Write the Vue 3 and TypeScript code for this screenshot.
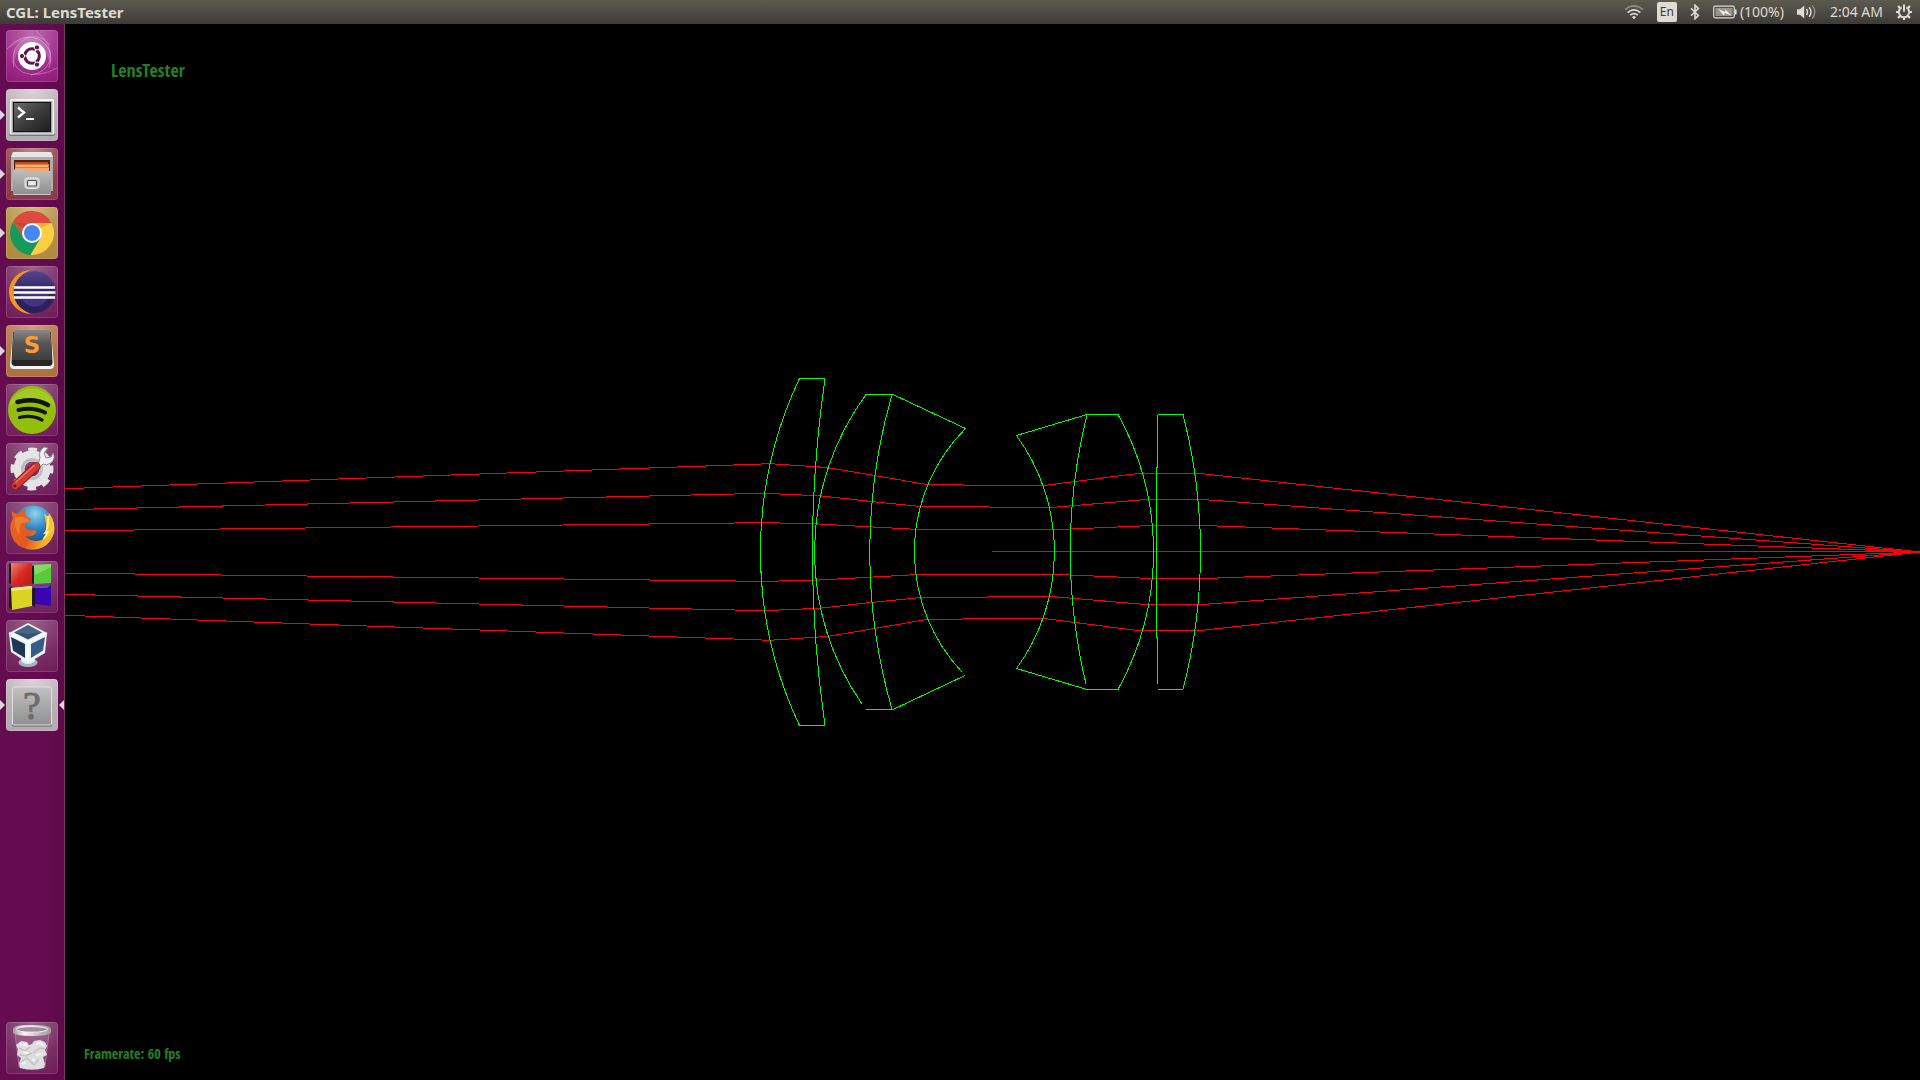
<script setup lang="ts">
interface LauncherItem {
  id: string
  label: string
  tint: string
  running?: boolean
  focused?: boolean
}

type Point = [number, number]

const launcher: LauncherItem[] = [
  { id: 'dash', label: 'Search your computer', tint: 'dash' },
  { id: 'terminal', label: 'Terminal', tint: 'silver', running: true },
  { id: 'files', label: 'Files', tint: 'rust', running: true },
  { id: 'chrome', label: 'Google Chrome', tint: 'gold', running: true },
  { id: 'eclipse', label: 'Eclipse', tint: 'plain' },
  { id: 'sublime', label: 'Sublime Text', tint: 'copper', running: true },
  { id: 'spotify', label: 'Spotify', tint: 'plain' },
  { id: 'settings', label: 'System Settings', tint: 'plain' },
  { id: 'firefox', label: 'Firefox', tint: 'plain' },
  { id: 'blocks', label: 'Code::Blocks', tint: 'plain' },
  { id: 'vbox', label: 'VirtualBox', tint: 'plain' },
  { id: 'unknown', label: 'CGL: LensTester', tint: 'silver', running: true, focused: true },
  { id: 'trash', label: 'Trash', tint: 'plain' },
]

// Optical axis of the bench; the lower half of the ray fan mirrors the upper one.
const axis = 552
const focus: Point = [1920, 552]

const upperRays: Point[][] = [
  [[65, 488.7], [770, 463.7], [815, 466.7], [828, 467.6], [875, 475.6], [925, 484.2], [990, 485.6], [1043, 485.6], [1137, 473.6], [1201, 473.6], focus],
  [[65, 509.7], [764, 493.3], [813, 495.5], [820, 495.8], [870, 501.4], [919, 506.3], [1050, 507.6], [1147, 499.4], [1201, 499.4], focus],
  [[65, 530.8], [762, 522.7], [813, 523.6], [819, 524], [915, 529.3], [1053, 529.4], [1071, 529], [1154, 525.4], [1201, 525.4], focus],
]

const toPoints = (ray: Point[]): string => ray.map(([x, y]) => `${x},${y}`).join(' ')
const mirror = (ray: Point[]): Point[] => ray.map(([x, y]) => [x, 2 * axis - y])

const rays: string[] = [...upperRays, ...upperRays.map(mirror)].map(toPoints)

const lensPaths: string[] = [
  'M825 378.5H799.5A405 405 0 0 0 799.5 725.5H825',
  'M825 378.5A1210 1210 0 0 0 825 725.5',
  'M862 704A267 267 0 0 1 866 394.5H893L965.5 428.5A175 175 0 0 0 962 672',
  'M892 394.5A569 569 0 0 0 892 709.5',
  'M866 709.5H893L965 675.5',
  'M1118 414.5H1087L1016.5 435.5A198 198 0 0 1 1016.5 668.5L1087 689.5H1118',
  'M1087 414.5A574 574 0 0 0 1086 684',
  'M1118 414.5A284 284 0 0 1 1118 689.5',
  'M1157.5 415V467H1156.5V637H1157.5V684',
  'M1158 414.5H1183A549 549 0 0 1 1183 689.5H1158',
]
</script>

<template>
  <div class="desktop">
    <header class="panel">
      <h1 class="title">CGL: LensTester</h1>
      <div class="indicators">
        <button class="indicator" aria-label="Network">
          <svg width="20" height="16" viewBox="0 0 20 16" fill="none" stroke="#dfdbd2" stroke-width="1.6">
            <path d="M1 5.6Q10-1.8 19 5.6" stroke="#8f8c84" />
            <path d="M3.6 8.6Q10 3.2 16.4 8.6" />
            <path d="M6.2 11.2Q10 8 13.8 11.2" />
            <path d="M8 13.2Q10 11 12 13.2L10 15.2Z" fill="#dfdbd2" stroke="none" />
          </svg>
        </button>
        <button class="indicator keyboard" aria-label="Keyboard layout">En</button>
        <button class="indicator" aria-label="Bluetooth">
          <svg width="10" height="16" viewBox="0 0 10 16" fill="none" stroke="#dfdbd2" stroke-width="1.6">
            <path d="M1 4.2L8.4 11.4L5 14.8V1.2L8.4 4.6L1 11.8" />
          </svg>
        </button>
        <button class="indicator battery" aria-label="Battery">
          <svg width="24" height="14" viewBox="0 0 24 14">
            <rect x="0.7" y="1.2" width="20.6" height="11.6" rx="1.5" fill="none" stroke="#dfdbd2" stroke-width="1.2" />
            <rect x="2.5" y="3" width="17" height="8" fill="#97948b" />
            <path d="M22 4.5h1.6v5H22z" fill="#dfdbd2" />
            <path d="M5 4L12 7L12.4 4.6L18.4 10.6L11.6 8L11 10.4Z" fill="#f2efe8" />
          </svg>
          <span>(100%)</span>
        </button>
        <button class="indicator" aria-label="Sound">
          <svg width="20" height="16" viewBox="0 0 20 16" fill="none" stroke="#dfdbd2" stroke-width="1.5">
            <path d="M0 5.2H3L7.2 1.4V14.6L3 10.8H0Z" fill="#dfdbd2" stroke="none" />
            <path d="M9.4 5Q11.6 8 9.4 11" />
            <path d="M12.2 3.2Q15.8 8 12.2 12.8" />
            <path d="M15.2 1.4Q20.4 8 15.2 14.6" stroke="#8f8c84" />
          </svg>
        </button>
        <button class="indicator clock">2:04 AM</button>
        <button class="indicator" aria-label="Session">
          <svg width="16" height="16" viewBox="0 0 16 16" fill="none" stroke="#dfdbd2">
            <path d="M5.6 3.4A5.2 5.2 0 1 0 10.4 3.4" stroke-width="2" />
            <path d="M8 0.6V7.6" stroke-width="2" />
            <path d="M0 8H3M13 8H16M8 13V16M2 2L4.4 4.4M14 2L11.6 4.4M2 14L4.4 11.6M14 14L11.6 11.6" stroke-width="2.2" />
          </svg>
        </button>
      </div>
    </header>

    <div class="workspace">
      <nav class="launcher" aria-label="Launcher">
        <div v-for="item in launcher" :key="item.id" class="slot" :class="[item.id, { running: item.running, focused: item.focused }]">
          <button class="tile" :class="item.tint" :aria-label="item.label">
            <svg v-if="item.id === 'dash'" viewBox="0 0 52 52">
              <g fill="none" stroke="#e9b9df" stroke-opacity="0.45" stroke-width="1">
                <path d="M1 19Q16 2 33 9Q50 20 43 38" />
                <path d="M8 37Q3 14 24 7Q36 5 44 15" />
                <path d="M30 1Q47 14 44 31Q39 43 25 45" />
                <path d="M7 31Q13 47 34 44Q45 42 51 38" />
              </g>
              <path d="M2 18Q18 1 34 9Q48 18 44 34Q40 18 26 13Q12 12 8 34Q4 18 20 8Z" fill="#fff" opacity="0.16" />
              <circle cx="26" cy="26" r="14" fill="#fff" />
              <circle cx="26" cy="26" r="7.3" fill="none" stroke="#65104d" stroke-width="3" stroke-dasharray="14 1.3" stroke-dashoffset="7" />
              <g fill="#65104d" stroke="#fff" stroke-width="1">
                <circle cx="16" cy="26" r="2.6" /><circle cx="31" cy="17.4" r="2.6" /><circle cx="31" cy="34.6" r="2.6" />
              </g>
            </svg>

            <svg v-else-if="item.id === 'terminal'" viewBox="0 0 52 52">
              <defs>
                <linearGradient id="term-screen" x1="0" y1="0" x2="1" y2="1">
                  <stop offset="0" stop-color="#6d6d6d" /><stop offset="0.5" stop-color="#3c3c3c" /><stop offset="1" stop-color="#1f1f1f" />
                </linearGradient>
              </defs>
              <rect x="3" y="10" width="46" height="37" rx="2" fill="#777" />
              <rect x="3.5" y="10" width="45" height="35.5" rx="1.5" fill="#f5f5f5" />
              <rect x="5.5" y="12" width="41" height="32.5" fill="#a9a9a9" />
              <rect x="7" y="13" width="38" height="30" fill="#111" />
              <rect x="8" y="14" width="36" height="28" fill="url(#term-screen)" />
              <path d="M12 18.5L18 23.5L12 28.5" fill="none" stroke="#fff" stroke-width="2.4" />
              <path d="M20 30H28" stroke="#fff" stroke-width="2.2" />
            </svg>

            <svg v-else-if="item.id === 'files'" viewBox="0 0 52 52">
              <defs>
                <linearGradient id="drawer" x1="0" y1="0" x2="0" y2="1">
                  <stop offset="0" stop-color="#bfbfbf" /><stop offset="1" stop-color="#8e8e8e" />
                </linearGradient>
              </defs>
              <path d="M7 4H45L47 8V43H5V8Z" fill="#aeaeae" />
              <path d="M7 4H45L47 9H5Z" fill="#e6e6e6" />
              <rect x="8" y="12" width="36" height="11" fill="#4f2012" />
              <path d="M9 14H42V17H9Z" fill="#bb4e25" /><path d="M9 16H43V21H9Z" fill="#e97735" /><path d="M10 18H42" stroke="#fff0cf" stroke-width="1" /><path d="M9 20H43V23H9Z" fill="#f6a766" />
              <path d="M7 21.5H18L20 23H45V46H7Z" fill="url(#drawer)" />
              <path d="M7.5 46.5H44.5" stroke="#c9c9c9" />
              <rect x="19" y="30" width="14" height="10.5" rx="2.5" fill="#c8c8c8" stroke="#ededed" stroke-width="1" />
              <rect x="21.5" y="32.5" width="9" height="5.5" rx="1" fill="#e8e8e8" stroke="#555" stroke-width="1.2" />
            </svg>

            <svg v-else-if="item.id === 'chrome'" viewBox="0 0 52 52">
              <path d="M26 26L7 14.5A22 22 0 0 1 45.5 16H26Z" fill="#dc4b3e" />
              <path d="M7.2 14.8A22 22 0 0 0 24.5 48L34.6 31L17.3 31Z" fill="#149b5b" />
              <path d="M24.5 48A22 22 0 0 0 45.5 16H26L34.6 31Z" fill="#ffce42" />
              <path d="M7.2 14.8L17 31L21 17Z" fill="#c13d31" opacity="0.65" />
              <path d="M45.5 16H27L35 21Z" fill="#e0a02e" opacity="0.6" />
              <circle cx="26" cy="26" r="10" fill="#fff" /><circle cx="26" cy="26" r="8" fill="#4587f2" />
            </svg>

            <svg v-else-if="item.id === 'eclipse'" viewBox="0 0 52 52">
              <defs>
                <linearGradient id="eclipse-ball" x1="0" y1="0" x2="0" y2="1">
                  <stop offset="0" stop-color="#51478c" /><stop offset="0.5" stop-color="#30245f" /><stop offset="1" stop-color="#2a205b" />
                </linearGradient>
              </defs>
              <path d="M25 4A22 22 0 0 0 25 48Q9 42 9 26Q9 10 25 4Z" fill="#f7941e" />
              <circle cx="28.5" cy="26" r="21" fill="url(#eclipse-ball)" />
              <path d="M14 26A14.5 14.5 0 0 0 43 26Z" fill="#4b3b94" opacity="0.7" />
              <path d="M8 21.5H49M7.5 26.5H49.5M8 31.5H49" stroke="#fff" stroke-width="2.4" />
            </svg>

            <svg v-else-if="item.id === 'sublime'" viewBox="0 0 52 52">
              <defs>
                <linearGradient id="key-face" x1="0" y1="0" x2="0" y2="1">
                  <stop offset="0" stop-color="#8a8a8a" /><stop offset="0.45" stop-color="#555" /><stop offset="1" stop-color="#3f3f3f" />
                </linearGradient>
              </defs>
              <path d="M7 7L4 40Q4 44 8 44H44Q48 44 48 40L45 7Z" fill="#f4f4f4" />
              <path d="M7 7L5.5 38Q6 41 9 41H43Q46 41 46.5 38L45 7Z" fill="#252525" />
              <path d="M10 5H42Q44 5 44.4 8L46 35H6L7.6 8Q8 5 10 5Z" fill="url(#key-face)" />
              <text x="26" y="28" text-anchor="middle" class="sublime-letter">S</text>
            </svg>

            <svg v-else-if="item.id === 'spotify'" viewBox="0 0 52 52">
              <circle cx="26" cy="26" r="24" fill="#93be0b" />
              <path d="M3 22A24 24 0 0 1 49 22Q26 8 3 22Z" fill="#b6d64a" opacity="0.5" />
              <g fill="none" stroke="#101400" stroke-linecap="round">
                <path d="M11.5 18Q28 13.5 42 21" stroke-width="4.6" /><path d="M12.5 26Q27 22.5 39 28.5" stroke-width="4" /><path d="M13.5 33.5Q26 30.5 36 36" stroke-width="3.3" />
              </g>
            </svg>

            <svg v-else-if="item.id === 'settings'" viewBox="0 0 52 52">
              <circle cx="26" cy="26" r="18" fill="none" stroke="#e4e4e4" stroke-width="7" stroke-dasharray="8 6.137" stroke-dashoffset="4" />
              <circle cx="26" cy="26" r="13" fill="none" stroke="#e4e4e4" stroke-width="11" />
              <circle cx="26" cy="26" r="9.5" fill="none" stroke="#bdbdbd" stroke-width="3" />
              <path d="M31 24L34 15Q32 8 38 4L42 5L38 10L40 15L45 14L47 10Q50 15 45 20Q40 23 37 21L31 27Z" fill="#f1f1f1" stroke="#8b8b8b" stroke-width="1" />
              <path d="M30 23.5L9.5 42.5" stroke="#8e1a16" stroke-width="9" stroke-linecap="round" />
              <path d="M30 23.5L9.5 42.5" stroke="#d43a34" stroke-width="7" stroke-linecap="round" />
              <path d="M28 22.5L10 39" stroke="#ed736d" stroke-width="1.6" stroke-linecap="round" />
              <circle cx="9" cy="43" r="1.6" fill="#701512" />
            </svg>

            <svg v-else-if="item.id === 'firefox'" viewBox="0 0 52 52">
              <defs>
                <radialGradient id="globe" cx="0.55" cy="0.2" r="0.8">
                  <stop offset="0" stop-color="#8ed5ee" /><stop offset="0.45" stop-color="#2f86c5" /><stop offset="1" stop-color="#133e7b" />
                </radialGradient>
                <linearGradient id="fox" x1="0" y1="0" x2="1" y2="0.4">
                  <stop offset="0" stop-color="#e8691b" /><stop offset="0.6" stop-color="#e4571f" /><stop offset="1" stop-color="#f9b52a" />
                </linearGradient>
              </defs>
              <circle cx="27" cy="24" r="20.5" fill="url(#globe)" />
              <path d="M38 11L42 15L43 11Q50 20 48 31Q43 46 29 47Q34 43 37 38Q43 29 38 11Z" fill="#f8c632" />
              <path d="M42 14Q43 26 39 31L42 30L37 38" fill="none" stroke="#fff2a0" stroke-width="1.5" />
              <path d="M6 9Q8 12 12 12Q15 8 20 7Q18 11 20 14L25 17Q26 19 20 21L19 25Q21 29 27 28Q31 28 30 31Q25 36 19 34Q27 42 38 37Q45 33 47 28Q47 42 32 47Q17 50 8 39Q1 27 7 16Q5 13 6 9Z" fill="url(#fox)" />
              <path d="M9 16Q15 13 20 16L24 18Q21 21 16 21Q12 26 14 33Q8 28 9 16Z" fill="#f3913a" opacity="0.6" />
            </svg>

            <svg v-else-if="item.id === 'blocks'" viewBox="0 0 52 52">
              <defs>
                <linearGradient id="red-block" x1="0" y1="0" x2="1" y2="1">
                  <stop offset="0" stop-color="#f0837a" /><stop offset="0.5" stop-color="#d9281f" /><stop offset="1" stop-color="#bf1712" />
                </linearGradient>
              </defs>
              <path d="M3 3L6 2V24L3 22ZM25 5H28V23L25 22ZM3 27L6 25V49L3 46ZM26 28L29 26V46L26 44Z" fill="#26151b" />
              <path d="M5 2H26V23L5 25Z" fill="url(#red-block)" />
              <path d="M28 4L45 3V22L28 23Z" fill="#5bc93a" /><path d="M28 4L45 3V6L29 14Z" fill="#a2e585" opacity="0.6" />
              <path d="M5 27L26 25V45L6 49Z" fill="#d9d322" /><path d="M5 27L26 25V28L6 30Z" fill="#efe96b" />
              <path d="M29 25L45 24V45L29 43Z" fill="#3a05ae" /><path d="M29 25L45 24L41 27H28Z" fill="#6f3cd0" />
            </svg>

            <svg v-else-if="item.id === 'vbox'" viewBox="0 0 52 52">
              <ellipse cx="22" cy="42.5" rx="9.5" ry="4.5" fill="#a4b5c6" /><ellipse cx="22" cy="40" rx="7" ry="4" fill="#e6edf4" />
              <path d="M22 3L41 13L39 33L22 43L5 32L3 13Z" fill="#edf3fa" />
              <path d="M22 5L36 12.5L22 19.5L8 12.5Z" fill="#345170" /><path d="M22 5L36 12.5L22 14L8 12.5Z" fill="#5b7996" opacity="0.5" />
              <path d="M5 17L19 24V38L7 30.5Z" fill="#1c3757" /><path d="M39 17L25 24V38L37 30.5Z" fill="#335d86" />
              <path d="M3 13L22 22.5L41 13M22 22.5V43" fill="none" stroke="#fff" stroke-width="1.6" />
            </svg>

            <svg v-else-if="item.id === 'unknown'" viewBox="0 0 52 52">
              <defs>
                <linearGradient id="blank-app" x1="0" y1="0" x2="0" y2="1">
                  <stop offset="0" stop-color="#c1c1c1" /><stop offset="1" stop-color="#919191" />
                </linearGradient>
              </defs>
              <rect x="6" y="8" width="40" height="39.5" rx="1.5" fill="#666" />
              <rect x="6.5" y="8" width="39" height="38" rx="1" fill="url(#blank-app)" stroke="#dedede" stroke-width="1" />
              <text x="26" y="40" text-anchor="middle" class="unknown-mark">?</text>
            </svg>

            <svg v-else viewBox="0 0 52 52">
              <defs>
                <linearGradient id="rim" x1="0" y1="0" x2="1" y2="0">
                  <stop offset="0" stop-color="#9c9c9c" /><stop offset="0.3" stop-color="#f7f7f7" /><stop offset="0.65" stop-color="#c6c6c6" /><stop offset="1" stop-color="#999" />
                </linearGradient>
              </defs>
              <path d="M9 11L13 45Q26 50 39 45L43 11Z" fill="#e9d2e4" fill-opacity="0.14" stroke="#e9d2e4" stroke-opacity="0.35" />
              <path d="M12 27L10 23L15 19L21 20L23 23L26 22L28 19L34 18L39 20L41 24L39 28L41 33L37 35L39 42L38 46Q26 49 14 46L13 41L15 36L11 33Z" fill="#dedede" />
              <path d="M13 26L19 29L24 25M27 31L34 26L39 27M13 33L20 34L26 31M15 40L21 36L28 43L33 37" fill="none" stroke="#c2c2c2" stroke-width="1.4" />
              <path d="M14 23L19 22L21 25M30 22L35 21L37 24M16 42L20 40M26 38L29 38M17 30L22 31M30 33L35 32" fill="none" stroke="#f2f2f2" stroke-width="2" />
              <path d="M7 7Q7 3 26 3Q45 3 45 7V11Q42 14 26 14Q10 14 7 11Z" fill="url(#rim)" />
              <ellipse cx="26" cy="7.4" rx="16" ry="2.8" fill="#a58a9e" stroke="#f0f0f0" stroke-width="1" />
            </svg>
          </button>
        </div>
      </nav>

      <main class="viewport">
        <svg class="bench" viewBox="65 24 1855 1056" role="img" aria-label="Rays traced through a lens system">
          <g fill="none" stroke-width="1" shape-rendering="crispEdges">
            <g stroke="#f00">
              <polyline v-for="(points, i) in rays" :key="i" :points="points" />
              <path d="M992 551.5H1920" />
            </g>
            <g stroke="#0f0">
              <path v-for="(d, i) in lensPaths" :key="i" :d="d" />
            </g>
          </g>
        </svg>
        <div class="overlay">
          <h2 class="scene-name">LensTester</h2>
          <p class="framerate">Framerate: 60 fps</p>
        </div>
      </main>
    </div>
  </div>
</template>

<style>
body {
  margin: 0;
  background: #000;
}
</style>

<style scoped>
.desktop {
  display: flex;
  flex-direction: column;
  min-height: 100vh;
  background: #000;
  font-family: 'Noto Sans', 'Open Sans', sans-serif;
}

button {
  margin: 0;
  padding: 0;
  border: 0;
  background: none;
  color: inherit;
  font: inherit;
}

svg {
  display: block;
}

.panel {
  display: flex;
  justify-content: space-between;
  align-items: center;
  height: 24px;
  padding: 0 8px 0 6px;
  background: linear-gradient(#5d5b50, #3c3b37);
  color: #dfdbd2;
  font-size: 14px;
  line-height: 24px;
}

.title {
  margin: 0;
  font-size: 15px;
  font-weight: 700;
}

.indicators,
.indicator {
  display: flex;
  align-items: center;
}

.indicators {
  gap: 13px;
}

.battery {
  gap: 3px;
}

.battery,
.clock {
  font-size: 14px;
}

.keyboard {
  justify-content: center;
  width: 20px;
  height: 20px;
  border-radius: 2px;
  background: #dfdbd2;
  color: #3c3b37;
  font-size: 12px;
}

.workspace {
  display: flex;
  flex: 1;
}

.launcher {
  display: flex;
  flex-direction: column;
  gap: 7px;
  box-sizing: border-box;
  width: 65px;
  padding: 6px 0;
  border-right: 1px solid #783c62;
  background: linear-gradient(90deg, #650b50 60%, #5e0a4b);
}

.slot {
  position: relative;
  padding-left: 6px;
}

.slot.trash {
  margin-top: auto;
}

.slot.running::before,
.slot.focused::after {
  content: '';
  position: absolute;
  top: 21px;
  border: 5px solid transparent;
}

.slot.running::before {
  left: 0;
  border-right: 0;
  border-left-color: #ddd6da;
}

.slot.focused::after {
  right: 0;
  border-left: 0;
  border-right-color: #ddd6da;
}

.tile {
  display: block;
  width: 52px;
  height: 52px;
  border-radius: 4px;
  box-shadow: inset 0 0 0 1px rgba(255, 255, 255, 0.14);
  overflow: hidden;
}

.tile.plain {
  background: radial-gradient(circle at 50% 0, #9a6389, #7a2e66 60%, #6f1c59);
}

.tile.dash {
  background: radial-gradient(circle at 50% 10%, #bd6cae, #a02d8b 60%, #8e1a78);
}

.tile.silver {
  background: radial-gradient(circle at 50% 0, #dad4d8, #b9b0b6 60%, #b3a8b0);
}

.tile.rust {
  background: radial-gradient(circle at 50% 0, #bd8683, #90414a 60%, #8a3845);
}

.tile.gold {
  background: radial-gradient(circle at 50% 0, #d2ba7c, #b29046 60%, #ad8a3f);
}

.tile.copper {
  background: radial-gradient(circle at 50% 0, #d0a081, #b37647 60%, #ae7041);
}

.sublime-letter {
  fill: #ff9b35;
  font: 700 23px 'DejaVu Sans', sans-serif;
}

.unknown-mark {
  fill: #6d6d6d;
  stroke: #6d6d6d;
  stroke-width: 1px;
  font: 40px 'Liberation Serif', serif;
}

.viewport {
  display: grid;
  flex: 1;
  min-width: 0;
}

.bench,
.overlay {
  grid-area: 1 / 1;
}

.bench {
  width: 100%;
  height: 100%;
}

.overlay {
  display: flex;
  flex-direction: column;
  justify-content: space-between;
  padding: 34px 46px 16px 19px;
  color: #238023;
  font-family: 'Open Sans Condensed', 'Liberation Sans Narrow', 'Open Sans', sans-serif;
  font-weight: 700;
}

.scene-name {
  margin: 0;
  padding-left: 27px;
  font-size: 18px;
  line-height: 24px;
}

.framerate {
  margin: 0;
  font-size: 14px;
  line-height: 20px;
}
</style>
